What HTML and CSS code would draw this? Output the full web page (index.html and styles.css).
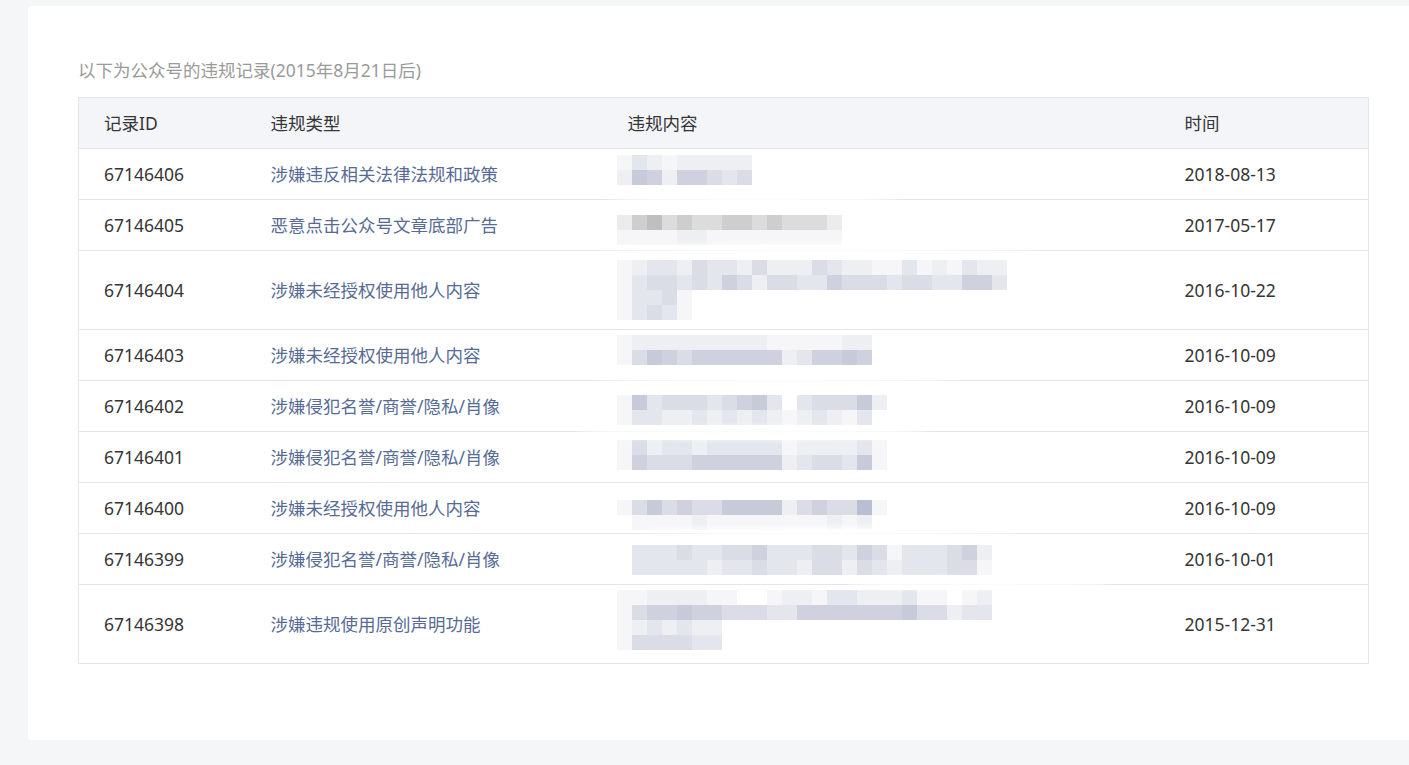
FILE: index.html
```html
<!DOCTYPE html>
<html lang="zh-CN">
<head>
<meta charset="utf-8">
<title>违规记录</title>
<link rel="stylesheet" href="styles.css">
</head>
<body>
<div class="card">
  <p class="tips">以下为公众号的违规记录(2015年8月21日后)</p>
  <div class="table-wrap">
    <table class="record-table">
      <colgroup>
        <col class="c-id"><col class="c-type"><col class="c-content"><col class="c-time">
      </colgroup>
      <thead>
        <tr><th>记录ID</th><th>违规类型</th><th>违规内容</th><th>时间</th></tr>
      </thead>
      <tbody>
        <tr>
          <td>67146406</td><td class="type">涉嫌违反相关法律法规和政策</td>
          <td class="content"><div class="mosaic m6">
            <div class="ln"><i class="a"></i><i class="c"></i><i class="b"></i><i class="a"></i><i class="b"></i><i class="b"></i><i class="b"></i><i class="b"></i><i class="b"></i></div>
            <div class="ln"><i class="b"></i><i class="f"></i><i class="e"></i><i class="b"></i><i class="e"></i><i class="e"></i><i class="d"></i><i class="c"></i><i class="d"></i></div>
          </div></td>
          <td>2018-08-13</td>
        </tr>
        <tr>
          <td>67146405</td><td class="type">恶意点击公众号文章底部广告</td>
          <td class="content"><div class="mosaic m15">
            <div class="ln"><i class="g1"></i><i class="g3"></i><i class="g4"></i><i class="g2"></i><i class="g3"></i><i class="g2"></i><i class="g2"></i><i class="g3"></i><i class="g3"></i><i class="g2"></i><i class="g3"></i><i class="g2"></i><i class="g2"></i><i class="g2"></i><i class="g1"></i></div>
            <div class="ln"><i class="a"></i><i class="a"></i><i class="a"></i><i class="a"></i><i class="b"></i><i class="b"></i><i class="a"></i><i class="a"></i><i class="a"></i><i class="a"></i><i class="a"></i><i class="a"></i><i class="a"></i><i class="a"></i><i class="a"></i></div>
          </div></td>
          <td>2017-05-17</td>
        </tr>
        <tr class="tall">
          <td>67146404</td><td class="type">涉嫌未经授权使用他人内容</td>
          <td class="content"><div class="mosaic m9">
            <div class="ln"><i class="a"></i><i class="b"></i><i class="c"></i><i class="c"></i><i class="b"></i><i class="d"></i><i class="c"></i><i class="c"></i><i class="b"></i><i class="d"></i><i class="b"></i><i class="b"></i><i class="b"></i><i class="d"></i><i class="c"></i><i class="b"></i><i class="b"></i><i class="a"></i><i class="a"></i><i class="c"></i><i class="a"></i><i class="b"></i><i class="a"></i><i class="c"></i><i class="b"></i><i class="b"></i></div>
            <div class="ln"><i class="a"></i><i class="c"></i><i class="d"></i><i class="d"></i><i class="c"></i><i class="d"></i><i class="c"></i><i class="e"></i><i class="d"></i><i class="b"></i><i class="d"></i><i class="d"></i><i class="c"></i><i class="c"></i><i class="e"></i><i class="d"></i><i class="d"></i><i class="d"></i><i class="c"></i><i class="d"></i><i class="d"></i><i class="c"></i><i class="c"></i><i class="e"></i><i class="e"></i><i class="c"></i></div>
            <div class="ln"><i class="a"></i><i class="c"></i><i class="c"></i><i class="d"></i><i class="a"></i></div>
            <div class="ln"><i class="a"></i><i class="c"></i><i class="d"></i><i class="c"></i><i class="a"></i></div>
          </div></td>
          <td>2016-10-22</td>
        </tr>
        <tr>
          <td>67146403</td><td class="type">涉嫌未经授权使用他人内容</td>
          <td class="content"><div class="mosaic m5">
            <div class="ln"><i class="a"></i><i class="b"></i><i class="b"></i><i class="b"></i><i class="b"></i><i class="b"></i><i class="b"></i><i class="b"></i><i class="b"></i><i class="b"></i><i class="a"></i><i class="a"></i><i class="a"></i><i class="a"></i><i class="a"></i><i class="b"></i><i class="b"></i></div>
            <div class="ln"><i class="a"></i><i class="d"></i><i class="f"></i><i class="e"></i><i class="d"></i><i class="e"></i><i class="e"></i><i class="e"></i><i class="e"></i><i class="e"></i><i class="e"></i><i class="b"></i><i class="c"></i><i class="e"></i><i class="e"></i><i class="f"></i><i class="e"></i></div>
          </div></td>
          <td>2016-10-09</td>
        </tr>
        <tr>
          <td>67146402</td><td class="type">涉嫌侵犯名誉/商誉/隐私/肖像</td>
          <td class="content"><div class="mosaic m14">
            <div class="ln"><i class="a"></i><i class="f"></i><i class="c"></i><i class="d"></i><i class="d"></i><i class="d"></i><i class="c"></i><i class="d"></i><i class="e"></i><i class="f"></i><i class="c"></i><i class="w"></i><i class="c"></i><i class="d"></i><i class="d"></i><i class="d"></i><i class="f"></i><i class="b"></i></div>
            <div class="ln"><i class="a"></i><i class="c"></i><i class="c"></i><i class="b"></i><i class="b"></i><i class="c"></i><i class="b"></i><i class="c"></i><i class="b"></i><i class="c"></i><i class="b"></i><i class="a"></i><i class="b"></i><i class="c"></i><i class="b"></i><i class="a"></i><i class="c"></i></div>
          </div></td>
          <td>2016-10-09</td>
        </tr>
        <tr>
          <td>67146401</td><td class="type">涉嫌侵犯名誉/商誉/隐私/肖像</td>
          <td class="content"><div class="mosaic m8">
            <div class="ln"><i class="a"></i><i class="d"></i><i class="b"></i><i class="c"></i><i class="c"></i><i class="b"></i><i class="c"></i><i class="c"></i><i class="c"></i><i class="c"></i><i class="c"></i><i class="a"></i><i class="b"></i><i class="b"></i><i class="b"></i><i class="b"></i><i class="c"></i><i class="a"></i></div>
            <div class="ln"><i class="a"></i><i class="e"></i><i class="d"></i><i class="d"></i><i class="d"></i><i class="e"></i><i class="e"></i><i class="e"></i><i class="e"></i><i class="e"></i><i class="e"></i><i class="b"></i><i class="c"></i><i class="d"></i><i class="d"></i><i class="c"></i><i class="f"></i><i class="a"></i></div>
          </div></td>
          <td>2016-10-09</td>
        </tr>
        <tr>
          <td>67146400</td><td class="type">涉嫌未经授权使用他人内容</td>
          <td class="content"><div class="mosaic m17">
            <div class="ln"><i class="a"></i><i class="d"></i><i class="f"></i><i class="d"></i><i class="e"></i><i class="d"></i><i class="d"></i><i class="f"></i><i class="f"></i><i class="f"></i><i class="f"></i><i class="b"></i><i class="d"></i><i class="e"></i><i class="d"></i><i class="d"></i><i class="g"></i><i class="a"></i></div>
            <div class="ln"><i class="w"></i><i class="a"></i><i class="a"></i><i class="a"></i><i class="a"></i><i class="b"></i><i class="a"></i><i class="a"></i><i class="a"></i><i class="a"></i><i class="a"></i><i class="a"></i><i class="a"></i><i class="a"></i><i class="b"></i><i class="a"></i><i class="b"></i></div>
          </div></td>
          <td>2016-10-09</td>
        </tr>
        <tr>
          <td>67146399</td><td class="type">涉嫌侵犯名誉/商誉/隐私/肖像</td>
          <td class="content"><div class="mosaic m11">
            <div class="ln"><i class="w"></i><i class="c"></i><i class="c"></i><i class="c"></i><i class="d"></i><i class="c"></i><i class="c"></i><i class="d"></i><i class="d"></i><i class="e"></i><i class="c"></i><i class="c"></i><i class="c"></i><i class="d"></i><i class="d"></i><i class="c"></i><i class="e"></i><i class="d"></i><i class="a"></i><i class="c"></i><i class="c"></i><i class="c"></i><i class="d"></i><i class="e"></i><i class="b"></i></div>
            <div class="ln"><i class="w"></i><i class="c"></i><i class="c"></i><i class="c"></i><i class="c"></i><i class="c"></i><i class="b"></i><i class="c"></i><i class="c"></i><i class="d"></i><i class="c"></i><i class="c"></i><i class="b"></i><i class="d"></i><i class="d"></i><i class="b"></i><i class="d"></i><i class="c"></i><i class="b"></i><i class="c"></i><i class="c"></i><i class="c"></i><i class="d"></i><i class="d"></i><i class="a"></i></div>
          </div></td>
          <td>2016-10-01</td>
        </tr>
        <tr class="tall">
          <td>67146398</td><td class="type">涉嫌违规使用原创声明功能</td>
          <td class="content"><div class="mosaic m5">
            <div class="ln"><i class="a"></i><i class="a"></i><i class="b"></i><i class="b"></i><i class="b"></i><i class="b"></i><i class="a"></i><i class="a"></i><i class="w"></i><i class="w"></i><i class="a"></i><i class="b"></i><i class="b"></i><i class="a"></i><i class="c"></i><i class="c"></i><i class="b"></i><i class="b"></i><i class="b"></i><i class="c"></i><i class="a"></i><i class="a"></i><i class="w"></i><i class="a"></i><i class="b"></i></div>
            <div class="ln"><i class="a"></i><i class="d"></i><i class="e"></i><i class="e"></i><i class="f"></i><i class="e"></i><i class="e"></i><i class="d"></i><i class="d"></i><i class="d"></i><i class="c"></i><i class="c"></i><i class="e"></i><i class="e"></i><i class="e"></i><i class="e"></i><i class="e"></i><i class="e"></i><i class="e"></i><i class="f"></i><i class="d"></i><i class="d"></i><i class="b"></i><i class="c"></i><i class="c"></i></div>
            <div class="ln"><i class="a"></i><i class="b"></i><i class="c"></i><i class="b"></i><i class="c"></i><i class="b"></i><i class="b"></i></div>
            <div class="ln"><i class="a"></i><i class="d"></i><i class="d"></i><i class="d"></i><i class="d"></i><i class="c"></i><i class="c"></i></div>
          </div></td>
          <td>2015-12-31</td>
        </tr>
      </tbody>
    </table>
    <span class="smudge s1"></span>
    <span class="smudge s2"></span>
    <span class="smudge s3"></span>
    <span class="smudge s4"></span>
    <span class="smudge s5"></span>
    <span class="smudge s6"></span>
  </div>
</div>
</body>
</html>
```

FILE: styles.css
```css
html, body {
  margin: 0;
  padding: 0;
}
body {
  background: #f5f6f8;
  overflow: hidden;
  padding: 6px 0 0 28px;
  font-family: "Noto Sans", "Noto Sans CJK SC", sans-serif;
  font-size: 17.5px;
  color: #353535;
}
.card {
  width: 1420px;
  box-sizing: border-box;
  background: #fff;
  border-radius: 4px;
  padding: 51px 0 76px 50px;
}
.tips {
  margin: 0 0 14px;
  line-height: 26px;
  color: #9a9a9a;
  font-size: 17.5px;
}
.table-wrap {
  position: relative;
  width: 1291px;
}
.record-table {
  width: 1291px;
  border-collapse: collapse;
  table-layout: fixed;
  border: 1px solid #e4e6eb;
}
.c-id { width: 167px; }
.c-type { width: 357px; }
.c-content { width: 557px; }
.c-time { width: 209px; }
.record-table th,
.record-table td {
  text-align: left;
  font-weight: normal;
  padding: 0 0 0 25px;
  height: 50px;
  line-height: 24px;
  vertical-align: middle;
  border-bottom: 1px solid #e4e6eb;
  white-space: nowrap;
}
.record-table thead th {
  background: #f4f5f9;
  color: #353535;
}
.record-table tr.tall td {
  height: 78px;
}
.record-table td.type {
  color: #576b95;
}
.record-table td.content {
  vertical-align: top;
}
.mosaic {
  margin-left: -11px;
  display: flex;
  flex-direction: column;
}
.mosaic.m5 { margin-top: 5px; }
.mosaic.m6 { margin-top: 6px; }
.mosaic.m8 { margin-top: 8px; }
.mosaic.m9 { margin-top: 9px; }
.mosaic.m11 { margin-top: 11px; }
.mosaic.m14 { margin-top: 14px; }
.mosaic.m15 { margin-top: 15px; }
.mosaic.m17 { margin-top: 17px; }
.ln {
  display: flex;
  height: 15px;
}
.ln i {
  display: block;
  width: 15px;
  height: 15px;
  flex: none;
}
.ln .w { background: #ffffff; }
.ln .a { background: #f6f6f9; }
.ln .b { background: #eeeff3; }
.ln .c { background: #e4e6ed; }
.ln .d { background: #dadde6; }
.ln .e { background: #cfd2de; }
.ln .f { background: #c6cad9; }
.ln .g { background: #b9bed1; }
.ln .g1 { background: #ececec; }
.ln .g2 { background: #dcdcdc; }
.ln .g3 { background: #cecece; }
.ln .g4 { background: #bfbfbf; }
.smudge {
  position: absolute;
  background: rgba(255, 255, 255, 0.92);
  border-radius: 50%;
  filter: blur(3px);
}
.s1 { left: 530px; top: 94px; width: 290px; height: 12px; }
.s2 { left: 520px; top: 147px; width: 440px; height: 10px; }
.s3 { left: 520px; top: 276px; width: 360px; height: 10px; }
.s4 { left: 500px; top: 330px; width: 350px; height: 12px; }
.s5 { left: 770px; top: 481px; width: 260px; height: 10px; }
.s6 { left: 560px; top: 430px; width: 380px; height: 10px; }
```
